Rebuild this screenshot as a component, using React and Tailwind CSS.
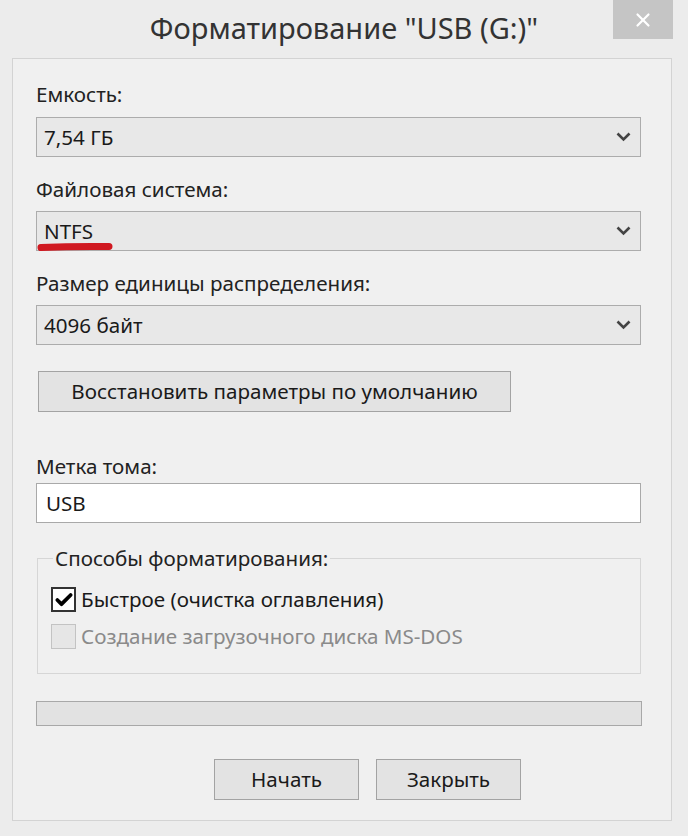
import { Check, X } from 'lucide-react'

const font = { fontFamily: '"Noto Sans", "Liberation Sans", sans-serif' }

const Chevron = () => (
  <svg width="15" height="10" viewBox="0 0 15 10" className="shrink-0">
    <path d="M1.5 1.5 L7.5 7.5 L13.5 1.5" fill="none" stroke="#444" strokeWidth="2.6" />
  </svg>
)

const Combo = ({ value, children }) => (
  <div className="relative flex items-center justify-between h-[40px] w-[605px] border border-[#acacac] bg-[#e8e8e8] pl-[7px] pr-[9px] text-[20.6px] text-[#1a1a1a]">
    <span>{value}</span>
    <Chevron />
    {children}
  </div>
)

const Label = ({ children, className = '' }) => (
  <div className={`h-[28px] leading-[28px] text-[20.6px] text-[#222] ${className}`}>{children}</div>
)

const Btn = ({ children, className = '' }) => (
  <button className={`h-[41px] border border-[#a3a3a3] bg-[#e3e3e3] text-[20.6px] text-[#1a1a1a] ${className}`}>
    {children}
  </button>
)

export default function App() {
  return (
    <div className="w-[688px] h-[836px] bg-[#ececec] overflow-hidden" style={font}>
      <div className="grid grid-cols-[1fr_auto_1fr] h-[58px]">
        <div />
        <h1 className="pt-[8px] text-[29px] leading-[40px] text-[#333] font-normal">
          Форматирование "USB (G:)"
        </h1>
        <div className="flex justify-end pr-[15px]">
          <div className="w-[60px] h-[39px] bg-[#c5c5c5] flex items-center justify-center">
            <X size={22} strokeWidth={2.4} className="text-white" />
          </div>
        </div>
      </div>

      <div className="ml-[12px] mr-[16px] h-[763px] border border-[#d3d3d3] bg-[#f0f0f0] pl-[23px]">
        <Label className="mt-[21px]">Емкость:</Label>
        <div className="mt-[9px]">
          <Combo value="7,54 ГБ" />
        </div>

        <Label className="mt-[18px]">Файловая система:</Label>
        <div className="mt-[8px]">
          <Combo value="NTFS">
            <svg width="78" height="12" viewBox="0 0 78 12" className="absolute left-[-1px] top-[29px]">
              <path d="M5 6.5 Q38 5 73 5.5" fill="none" stroke="#d01820" strokeWidth="7" strokeLinecap="round" />
            </svg>
          </Combo>
        </div>

        <Label className="mt-[18px]">Размер единицы распределения:</Label>
        <div className="mt-[8px]">
          <Combo value="4096 байт" />
        </div>

        <Btn className="mt-[26px] ml-[2px] w-[473px]">Восстановить параметры по умолчанию</Btn>

        <Label className="mt-[40px]">Метка тома:</Label>
        <div className="mt-[3px] h-[40px] w-[605px] border border-[#a9a9a9] bg-white pl-[9px] text-[20.6px] leading-[38px] text-[#1a1a1a]">
          USB
        </div>

        <fieldset className="mt-[21px] ml-[1px] w-[604px] h-[130px] border border-[#d6d6d6] pl-[13px] pr-[10px]">
          <legend className="ml-[2px] px-[2px] text-[20.6px] leading-[28px] text-[#222]">Способы форматирования:</legend>
          <div className="mt-[15px] flex items-center gap-[5px] h-[25px]">
            <div className="w-[25px] h-[25px] border-2 border-[#333] bg-white flex items-center justify-center">
              <Check size={20} strokeWidth={4.5} className="text-black" />
            </div>
            <span className="text-[20.6px] text-[#1a1a1a]">Быстрое (очистка оглавления)</span>
          </div>
          <div className="mt-[12px] flex items-center gap-[5px] h-[25px]">
            <div className="w-[25px] h-[25px] border border-[#c3c3c3] bg-[#e6e6e6]" />
            <span className="text-[20.6px] text-[#8a8a8a]">Создание загрузочного диска MS-DOS</span>
          </div>
        </fieldset>

        <div className="mt-[27px] h-[25px] w-[606px] border border-[#a8a8a8] bg-[#e2e2e2]" />

        <div className="mt-[33px] flex gap-[17px] pl-[178px]">
          <Btn className="w-[145px]">Начать</Btn>
          <Btn className="w-[145px]">Закрыть</Btn>
        </div>
      </div>
    </div>
  )
}
